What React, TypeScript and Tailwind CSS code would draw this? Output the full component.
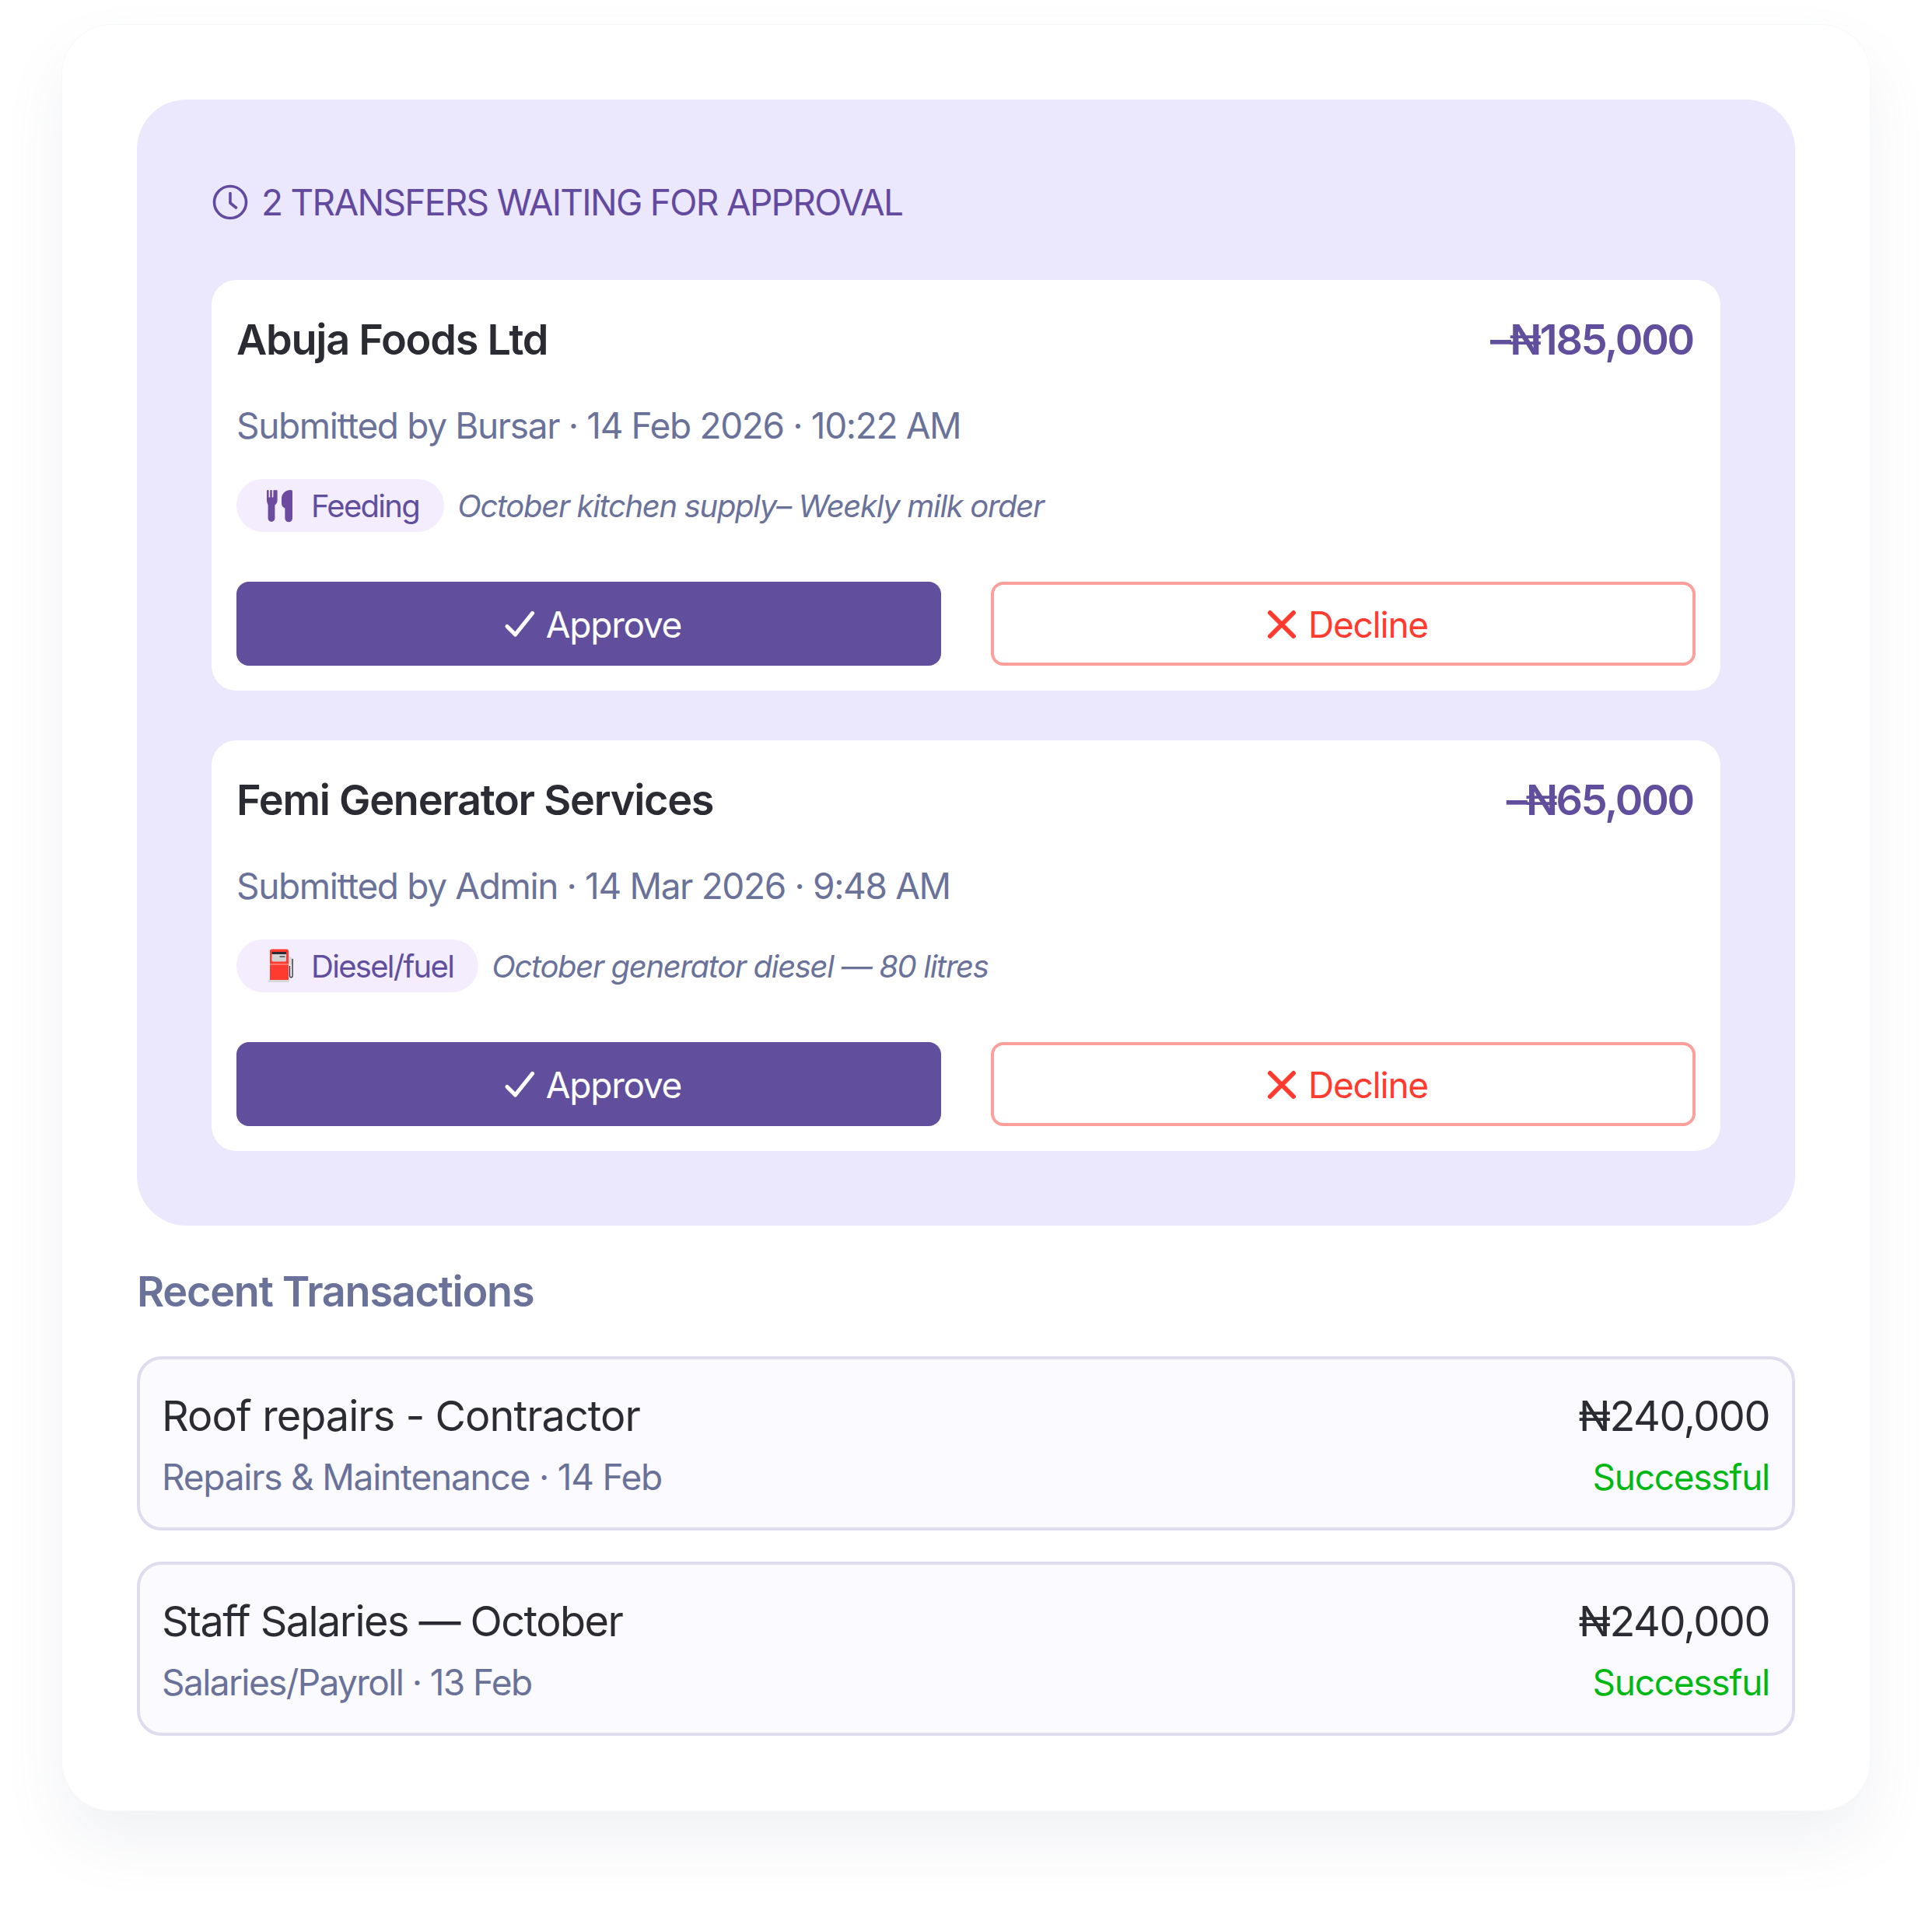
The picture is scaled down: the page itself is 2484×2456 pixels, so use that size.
import React from "react";

function Clock() {
  return (
    <svg viewBox="0 0 48 48" className="w-[48px] h-[48px] shrink-0" fill="none" stroke="#634a9e" strokeWidth="3.6" strokeLinecap="round" strokeLinejoin="round">
      <circle cx="24" cy="24" r="20.5" />
      <path d="M24 12.5V25l7.5 6" />
    </svg>
  );
}

function Utensils() {
  return (
    <svg viewBox="0 0 48 48" className="w-[48px] h-[48px] shrink-0" fill="#6b4a9f">
      <path d="M7 5.2a1.2 1.2 0 0 1 2.6 0V13.5h1.6V5.2a1.2 1.2 0 0 1 2.6 0V13.5h1.6V5.2a1.2 1.2 0 0 1 2.6 0V13.5h0V5.2a1.2 1.2 0 0 1 2.6 0V17c0 3.4-1.4 5.4-3.2 6.3V40.5a4.4 4.4 0 0 1-8.8 0V23.3C8.4 22.4 7 20.4 7 17z" />
      <path d="M38 4a2 2 0 0 1 2 2V40.5a4.8 4.8 0 0 1-9.6 0V27.5C27.8 26.5 26 24.5 26 20.5V15C26 8.5 31.5 4 38 4z" />
    </svg>
  );
}

function Pump() {
  return (
    <svg viewBox="0 0 48 48" className="w-[48px] h-[48px] shrink-0">
      <path d="M34 10l6.5 4.5v8h-4l-2.5-2z" fill="#d8d8d8" />
      <path d="M11 5a2.5 2.5 0 0 1 2.500-2.500h19A2.500 2.500 0 0 1 35 5v37H11z" fill="#ff3b30" />
      <rect x="13.500" y="6" width="18.500" height="12.500" rx="1.500" fill="#d2d2d2" />
      <rect x="13.500" y="6" width="18.500" height="3" fill="#2b2b33" />
      <rect x="23.500" y="11.500" width="7" height="1.200" fill="#2b2b33" />
      <rect x="11" y="21.500" width="24" height="1" fill="#ffb0a8" />
      <path d="M36.500 24v13a1.800 1.800 0 0 0 3.600 0V15" fill="none" stroke="#2b2b33" strokeWidth="1.300" />
      <rect x="9" y="42" width="27" height="3" fill="#d8d8d8" />
    </svg>
  );
}

function Check() {
  return (
    <svg viewBox="0 0 44 44" className="w-[44px] h-[44px] shrink-0" fill="none" stroke="#ffffff" strokeWidth="5.2" strokeLinecap="round" strokeLinejoin="round">
      <path d="M6 24.500l10.500 10.500L38.500 7.500" />
    </svg>
  );
}

function Cross() {
  return (
    <svg viewBox="0 0 44 44" className="w-[44px] h-[44px] shrink-0" fill="none" stroke="#ff3b30" strokeWidth="6" strokeLinecap="round">
      <path d="M7 7l30 30M37 7L7 37" />
    </svg>
  );
}

function Pending({ name, amount, sub, icon, tag, note }: { name: string; amount: string; sub: string; icon: React.ReactNode; tag: string; note: string }) {
  return (
    <div className="bg-white rounded-[32px] px-[32px] pt-[32px] pb-[32px]">
      <div className="flex justify-between items-center h-[90px]">
        <div className="text-[54px] leading-[90px] font-semibold text-[#2b2b33] tracking-[-1.26px]">{name}</div>
        <div className="text-[54px] leading-[90px] font-semibold text-[#614f9e] tracking-[-2.2px] mr-[3px]">{amount}</div>
      </div>
      <div className="mt-[34px] text-[46px] leading-[62px] text-[#6b7299] tracking-[-1.35px]">{sub}</div>
      <div className="mt-[38px] flex items-center gap-[17px]">
        <div className="h-[68px] rounded-full bg-[#f3edfe] pl-[32px] pr-[32px] flex items-center gap-[16px]">
          {icon}
          <span className="text-[40px] text-[#614f9e] tracking-[-1.7px] pt-[2px]">{tag}</span>
        </div>
        <span className="text-[40px] italic text-[#6b7299] tracking-[-1.33px] pt-[2px]">{note}</span>
      </div>
      <div className="mt-[64px] grid grid-cols-2 gap-[64px]">
        <div className="h-[108px] rounded-[16px] bg-[#614f9e] flex items-center justify-center gap-[12px] pl-[8px] pt-[2px] text-white text-[46px] tracking-[-1.25px]">
          <Check />
          <span>Approve</span>
        </div>
        <div className="h-[108px] rounded-[16px] bg-white border-[4px] border-[#ff9f9c] flex items-center justify-center gap-[12px] pl-[8px] pt-[2px] text-[#ff3b30] text-[46px] tracking-[-1.25px]">
          <Cross />
          <span>Decline</span>
        </div>
      </div>
    </div>
  );
}

function Row({ title, sub, titleClass, subClass }: { title: string; sub: string; titleClass: string; subClass: string }) {
  return (
    <div className="h-[224px] rounded-[32px] border-[4px] border-[#dfdcef] bg-[#fbfaff] px-[28px] flex flex-col justify-center">
      <div className="flex justify-between items-center h-[72px] pt-[5px]">
        <span className={titleClass}>{title}</span>
        <span className="text-[54px] text-[#2b2b33] tracking-[-1.5px] mr-[1px]">₦240,000</span>
      </div>
      <div className="flex justify-between items-center h-[62px] mt-[15px]">
        <span className={subClass}>{sub}</span>
        <span className="text-[46px] text-[#00b814] tracking-[-1.25px] mr-[1px]">Successful</span>
      </div>
    </div>
  );
}

export default function App() {
  return (
    <div className="w-[2484px] h-[2456px] bg-white pt-[32px] px-[80px] font-['Inter',sans-serif]">
      <div className="h-[2296px] rounded-[64px] bg-white p-[96px] shadow-[0_0_0_1px_#f7f8f9,0_40px_80px_rgba(100,116,139,0.09)]">
        <div className="rounded-[64px] bg-[#ebe8fe] p-[96px]">
          <div className="flex items-center gap-[16px] h-[72px] mb-[64px] text-[46px] text-[#634a9e] tracking-[-1.7px]">
            <Clock />
            <span>2 TRANSFERS WAITING FOR APPROVAL</span>
          </div>
          <div className="flex flex-col gap-[64px]">
            <Pending name="Abuja Foods Ltd" amount="–₦185,000" sub="Submitted by Bursar · 14 Feb 2026 · 10:22 AM" icon={<Utensils />} tag="Feeding" note="October kitchen supply– Weekly milk order" />
            <Pending name="Femi Generator Services" amount="–₦65,000" sub="Submitted by Admin · 14 Mar 2026 · 9:48 AM" icon={<Pump />} tag="Diesel/fuel" note="October generator diesel — 80 litres" />
          </div>
        </div>
        <div className="pt-[48px] pb-[48px] h-[168px] flex items-center text-[54px] font-semibold text-[#6b7299] tracking-[-1.25px]">Recent Transactions</div>
        <div className="flex flex-col gap-[40px]">
          <Row title="Roof repairs - Contractor" sub="Repairs & Maintenance · 14 Feb" titleClass="text-[54px] text-[#2b2b33] tracking-[-0.95px]" subClass="text-[46px] text-[#6b7299] tracking-[-1.22px]" />
          <Row title="Staff Salaries — October" sub="Salaries/Payroll · 13 Feb" titleClass="text-[54px] text-[#2b2b33] tracking-[-1.55px]" subClass="text-[46px] text-[#6b7299] tracking-[-1.6px]" />
        </div>
      </div>
    </div>
  );
}
